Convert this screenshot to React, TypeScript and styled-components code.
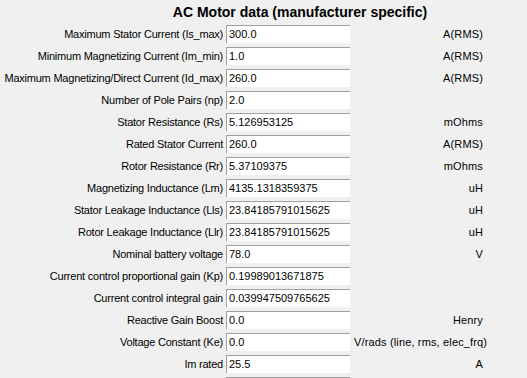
import React from "react";
import styled, { createGlobalStyle } from "styled-components";

const GlobalStyle = createGlobalStyle`
  html, body {
    margin: 0;
    padding: 0;
    background: #f0f0f0;
    overflow: hidden;
  }
`;

const fields = [
  { label: "Maximum Stator Current (Is_max)", value: "300.0", unit: "A(RMS)" },
  { label: "Minimum Magnetizing Current (Im_min)", value: "1.0", unit: "A(RMS)" },
  { label: "Maximum Magnetizing/Direct Current (Id_max)", value: "260.0", unit: "A(RMS)" },
  { label: "Number of Pole Pairs (np)", value: "2.0", unit: "" },
  { label: "Stator Resistance (Rs)", value: "5.126953125", unit: "mOhms" },
  { label: "Rated Stator Current", value: "260.0", unit: "A(RMS)" },
  { label: "Rotor Resistance (Rr)", value: "5.37109375", unit: "mOhms" },
  { label: "Magnetizing Inductance (Lm)", value: "4135.1318359375", unit: "uH" },
  { label: "Stator Leakage Inductance (Lls)", value: "23.84185791015625", unit: "uH" },
  { label: "Rotor Leakage Inductance (Llr)", value: "23.84185791015625", unit: "uH" },
  { label: "Nominal battery voltage", value: "78.0", unit: "V" },
  { label: "Current control proportional gain (Kp)", value: "0.19989013671875", unit: "" },
  { label: "Current control integral gain", value: "0.039947509765625", unit: "" },
  { label: "Reactive Gain Boost", value: "0.0", unit: "Henry" },
  { label: "Voltage Constant (Ke)", value: "0.0", unit: "V/rads (line, rms, elec_frq)" },
  { label: "Im rated", value: "25.5", unit: "A" },
  { label: "", value: "", unit: "" },
];

export default function App() {
  return (
    <>
      <GlobalStyle />
      <Panel>
        <Title>AC Motor data (manufacturer specific)</Title>
        <Form>
          {fields.map((f, i) => (
            <React.Fragment key={i}>
              <Label>{f.label}</Label>
              <Field defaultValue={f.value} />
              <Unit>{f.unit}</Unit>
            </React.Fragment>
          ))}
        </Form>
      </Panel>
    </>
  );
}

const Panel = styled.div`
  width: 600px;
  font-family: Tahoma, "Liberation Sans", Arial, sans-serif;
  color: #000;
`;

const Title = styled.h1`
  margin: 0;
  height: 25px;
  line-height: 24px;
  text-align: center;
  font-size: 14px;
  font-weight: bold;
`;

const Form = styled.div`
  display: grid;
  grid-template-columns: 223px 127px 133px;
  grid-auto-rows: 18px;
  row-gap: 4px;
  align-items: center;
`;

const Label = styled.span`
  text-align: right;
  font-size: 11px;
  letter-spacing: -0.22px;
  white-space: nowrap;
`;

const Field = styled.input`
  box-sizing: border-box;
  height: 18px;
  width: 124px;
  margin: 0 0 0 3px;
  padding: 0 2px 1px;
  border: none;
  border-top: 1px solid #a0a0a0;
  border-left: 1px solid #a0a0a0;
  background: #fff;
  font-family: inherit;
  font-size: 11px;
  color: #000;
  outline: none;
`;

const Unit = styled.span`
  padding-left: 4px;
  text-align: right;
  font-size: 11px;
  letter-spacing: 0.15px;
  white-space: nowrap;
`;
